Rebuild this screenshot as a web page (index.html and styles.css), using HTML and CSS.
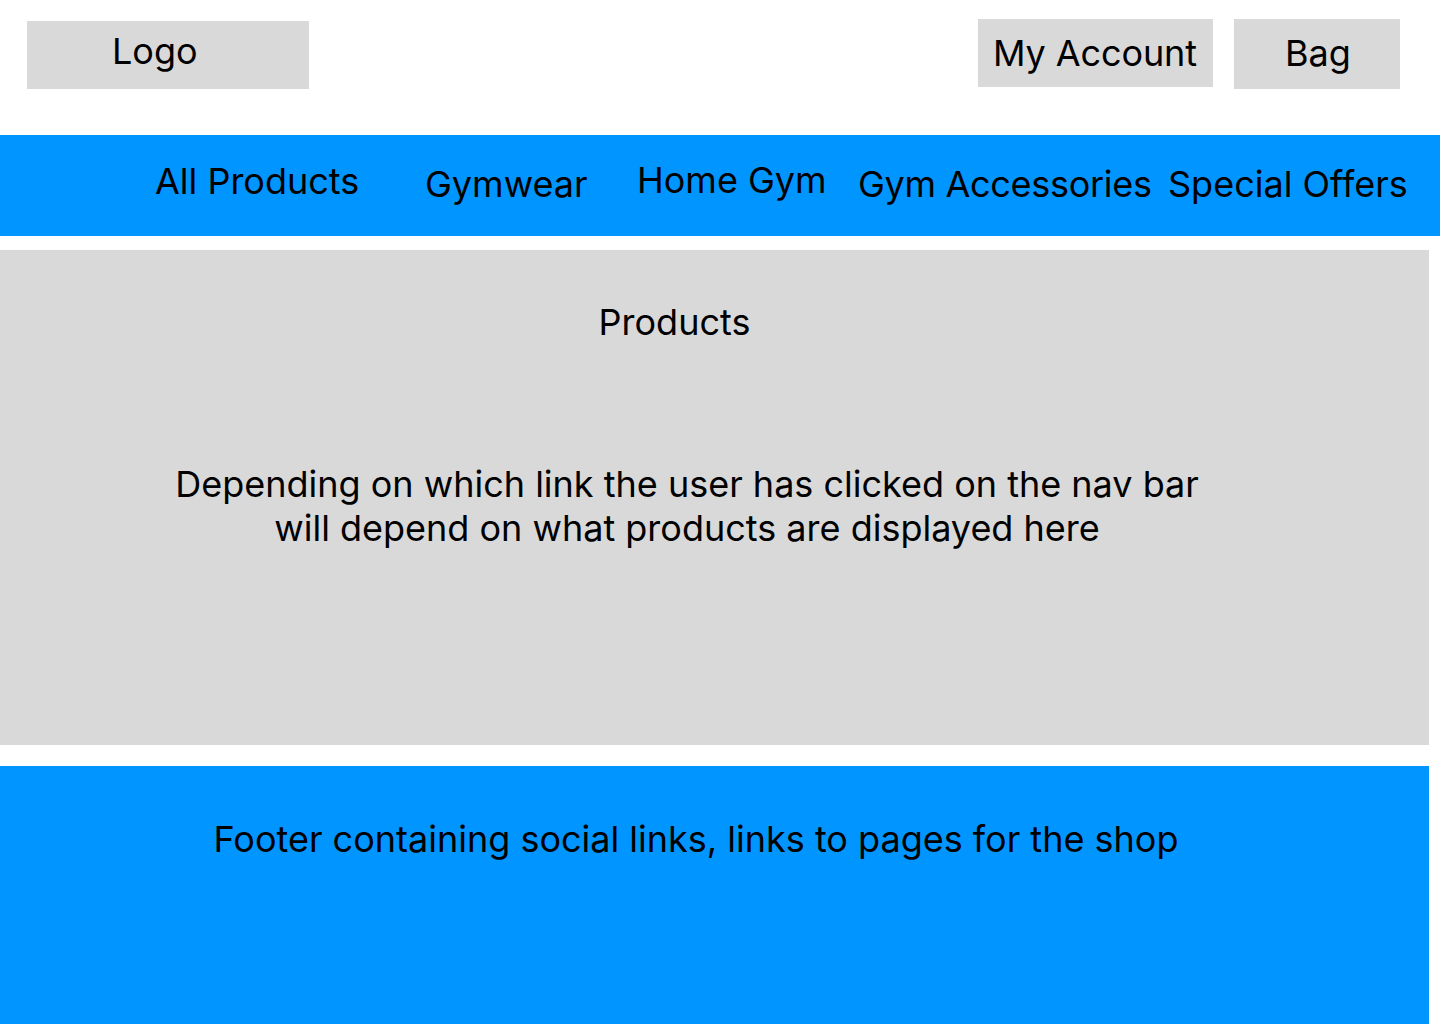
FILE: index.html
```html
<!DOCTYPE html>
<html lang="en">
<head>
<meta charset="utf-8">
<title>Gym Shop Wireframe</title>
<link rel="stylesheet" href="styles.css">
</head>
<body>
<header class="top-bar">
  <div class="box logo">Logo</div>
  <div class="top-actions">
    <div class="box account">My Account</div>
    <div class="box bag">Bag</div>
  </div>
</header>
<nav class="nav">
  <a class="nav-item nav-all">All Products</a>
  <a class="nav-item nav-low">Gymwear</a>
  <a class="nav-item nav-home">Home Gym</a>
  <a class="nav-item nav-low nav-tight">Gym Accessories</a>
  <a class="nav-item nav-low">Special Offers</a>
</nav>
<main class="products">
  <h1 class="products-title">Products</h1>
  <p class="products-text">Depending on which link the user has clicked on the nav bar<br>will depend on what products are displayed here</p>
</main>
<footer class="footer">
  <p class="footer-text">Footer containing social links, links to pages for the shop</p>
</footer>
</body>
</html>
```
FILE: styles.css
```css
* { box-sizing: border-box; }
html, body {
  margin: 0;
  padding: 0;
  background: #ffffff;
}
body {
  width: 1440px;
  height: 1024px;
  overflow: hidden;
  font-family: Inter, "Noto Sans", sans-serif;
  font-size: 36px;
  line-height: 44px;
  color: #000000;
}
.top-bar {
  height: 135px;
  display: flex;
  align-items: flex-start;
  padding: 0 40px 0 27px;
}
.box {
  background: #d9d9d9;
  white-space: nowrap;
}
.logo {
  width: 282px;
  height: 68px;
  margin-top: 21px;
  padding: 8px 0 0 85px;
}
.top-actions {
  margin-left: auto;
  display: flex;
  align-items: flex-start;
  gap: 21px;
  padding-top: 19px;
}
.account {
  width: 235px;
  height: 68px;
  padding: 12px 0 0 15px;
  letter-spacing: -0.1px;
}
.bag {
  width: 166px;
  height: 70px;
  padding: 12px 0 0 51px;
}
.nav {
  height: 101px;
  background: #0095ff;
  display: grid;
  grid-template-columns: 270px 212px 221px 310px auto;
  align-items: start;
  padding-left: 155px;
}
.nav-item {
  white-space: nowrap;
  color: #000000;
  text-decoration: none;
  margin-top: 24px;
}
.nav-low { margin-top: 27px; }
.nav-home { margin-top: 23px; }
.nav-tight { letter-spacing: -0.3px; }
.products {
  width: 1429px;
  height: 495px;
  margin-top: 14px;
  background: #d9d9d9;
  padding-top: 50px;
}
.products-title {
  margin: 0;
  font-size: 36px;
  font-weight: 400;
  line-height: 44px;
  text-align: center;
  padding-right: 80px;
}
.products-text {
  margin: 118px 0 0;
  text-align: center;
  padding-right: 55px;
}
.footer {
  width: 1429px;
  height: 258px;
  margin-top: 21px;
  background: #0095ff;
  padding-top: 51px;
}
.footer-text {
  margin: 0;
  text-align: center;
  padding-right: 37px;
}
```
